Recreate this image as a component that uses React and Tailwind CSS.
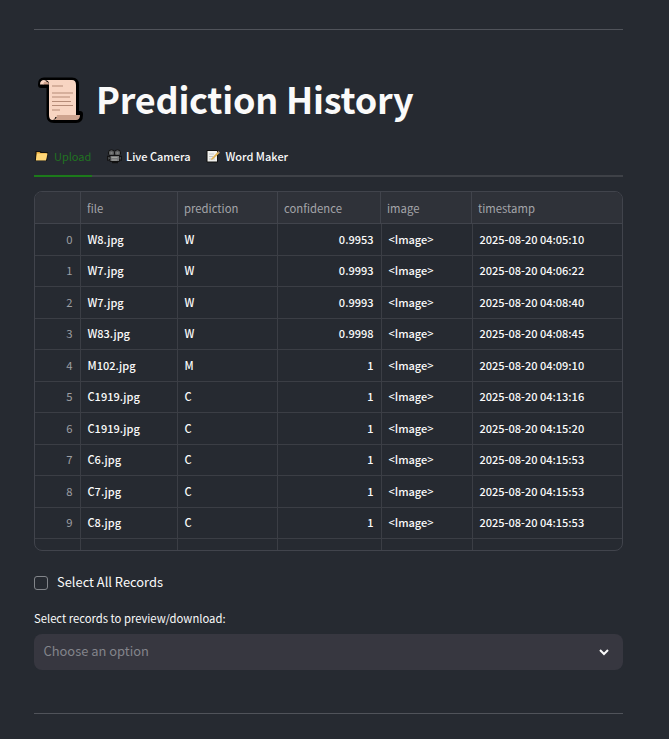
const rows = [
  ["W8.jpg", "W", "0.9953", "2025-08-20 04:05:10"],
  ["W7.jpg", "W", "0.9993", "2025-08-20 04:06:22"],
  ["W7.jpg", "W", "0.9993", "2025-08-20 04:08:40"],
  ["W83.jpg", "W", "0.9998", "2025-08-20 04:08:45"],
  ["M102.jpg", "M", "1", "2025-08-20 04:09:10"],
  ["C1919.jpg", "C", "1", "2025-08-20 04:13:16"],
  ["C1919.jpg", "C", "1", "2025-08-20 04:15:20"],
  ["C6.jpg", "C", "1", "2025-08-20 04:15:53"],
  ["C7.jpg", "C", "1", "2025-08-20 04:15:53"],
  ["C8.jpg", "C", "1", "2025-08-20 04:15:53"],
];

function Scroll() {
  return (
    <svg width="46" height="46" viewBox="0 0 46 46" className="shrink-0">
      <path
        d="M6 3.5H34Q38 3.5 38 8V37H42V38Q42 43 38 43H16Q11.5 43 11.5 38V8H3V7Q3 3.5 6 3.5Z"
        fill="#f3cfba"
        stroke="#000"
        strokeWidth="6"
        strokeLinejoin="round"
      />
      <path d="M6 3H34Q38 3 38 8V38H18Q17 43 14.5 43Q11 43 11 38V7Q11 3 6 3Z" fill="#f8d5c2" />
      <path d="M2 7.5Q2 3 6 3Q8 3 8.5 5Q6 5 5.5 7.5Z" fill="#f8d5c2" />
      <path d="M5 7.5Q6 4.5 8.5 4.5Q11 5 11 7.5Z" fill="#d1a48e" />
      <path d="M19 38H42Q42 43 38 43H15Q19 42 19 38Z" fill="#cfa48f" />
      <path d="M14 9H25M14 16H35M14 20H32M14 24.5H33M14 28.5H35M14 33H22" stroke="#b58b77" strokeWidth="1" />
    </svg>
  );
}

function Folder() {
  return (
    <svg width="15" height="14" viewBox="0 0 15 14" className="shrink-0">
      <path d="M2 2.5H6L7 3.5H13.5L12.5 11.5H1.5Z" fill="#e5a93c" stroke="#111" strokeWidth="1.2" strokeLinejoin="round" />
      <path d="M3 4.5H13.5L12 11.5H1.8Z" fill="#ffd778" />
    </svg>
  );
}

function MovieCamera() {
  return (
    <svg width="15" height="15" viewBox="0 0 15 15" className="shrink-0">
      <g stroke="#111" strokeWidth="1">
        <circle cx="4.5" cy="4" r="3.2" fill="#5d5f60" />
        <circle cx="10.5" cy="4" r="3.2" fill="#5d5f60" />
        <path d="M3 6.5H12.5V12.5H3Z" fill="#77797a" />
        <path d="M3 8L.6 7V11.5L3 10.5M12.5 8L14.4 7V11.5L12.5 10.5" fill="#4b4d4e" />
      </g>
      <path d="M3.5 4H5.5M9.5 4H11.5M4.5 8.5H10.5M5 11H10" stroke="#a0a19c" strokeWidth="1" />
      <path d="M5 13.5H11" stroke="#111" strokeWidth="1.5" />
    </svg>
  );
}

function Memo() {
  return (
    <svg width="15" height="15" viewBox="0 0 15 15" className="shrink-0">
      <path d="M1 1.5H11.5V13H1Z" fill="#f1f1ed" stroke="#111" strokeWidth="1" />
      <path d="M3 5H8M3 7.5H7M3 10H9" stroke="#b9bdbd" strokeWidth=".8" />
      <path d="M5.5 9.5L12 2.5L13.5 4L7 10.3L5 11Z" fill="#e2b457" />
      <path d="M11.4 3.2L12.4 2L14 3.5L13 4.5Z" fill="#a99078" />
    </svg>
  );
}

export default function App() {
  return (
    <main className="h-[739px] w-[669px] overflow-hidden whitespace-nowrap bg-[#262a31] pl-[34px] pr-[46px] pt-[29px] font-['Noto_Sans_CJK_SC','Noto_Sans',sans-serif] text-[#fafafa]">
      <hr className="border-t border-[#50535a]" />
      <h1 className="mt-[40px] flex h-[60px] items-center pl-[4px] text-[36px] font-bold leading-none tracking-[-0.25px]">
        <Scroll />
        <span className="-mt-[5px] ml-[12px]">Prediction History</span>
      </h1>
      <nav className="mt-[7px] flex h-[40px] border-b-2 border-[#3e4147] text-[11px] font-medium">
        <div className="-mb-0.5 mr-[15px] flex w-[58px] items-center gap-[5px] border-b-2 border-[#1c7a1a] font-normal text-[#217321]">
          <Folder />
          <span>Upload</span>
        </div>
        <div className="mr-4 flex items-center gap-1">
          <MovieCamera />
          <span>Live Camera</span>
        </div>
        <div className="flex items-center gap-1">
          <Memo />
          <span>Word Maker</span>
        </div>
      </nav>
      <section className="mt-[14px] h-[360px] w-[589px] overflow-hidden rounded-lg border border-[#41444c] text-[11px] leading-none">
        <div className="grid h-8 grid-cols-[46px_97px_100px_103px_91px_1fr] border-b border-[#41444c] bg-[#2f3239] text-[11.3px] text-[#a4a5a9] *:flex *:items-center *:border-r *:border-[#41444c] *:pl-1.5 *:pt-0.5 *:last:border-r-0">
          <div />
          <div>file</div>
          <div>prediction</div>
          <div>confidence</div>
          <div>image</div>
          <div>timestamp</div>
        </div>
        {rows.map(([file, letter, score, time], i) => (
          <div
            key={i}
            className="grid h-[31.5px] grid-cols-[46px_97px_100px_104px_91px_1fr] border-b border-[#3b3e45] font-medium *:flex *:items-center *:border-r *:border-[#3b3e45] *:pl-[6.5px] *:pr-[7.5px] *:last:border-r-0"
          >
            <div className="justify-end text-[11.3px] font-normal text-[#9d9fa3]">{i}</div>
            <div>{file}</div>
            <div>{letter}</div>
            <div className="justify-end">{score}</div>
            <div>&lt;Image&gt;</div>
            <div>{time}</div>
          </div>
        ))}
        <div className="grid h-4 grid-cols-[46px_97px_100px_104px_91px_1fr] *:border-r *:border-[#3b3e45] *:last:border-r-0">
          <div />
          <div />
          <div />
          <div />
          <div />
          <div />
        </div>
      </section>
      <label className="mt-[20px] flex h-6 items-center gap-[9px] text-[12.9px] leading-none">
        <span className="h-[14px] w-[14px] rounded-[3px] border border-[#82858a]" />
        <span className="-mt-px">Select All Records</span>
      </label>
      <p className="mt-[12px] h-[24px] text-[11.25px] leading-[22px]">Select records to preview/download:</p>
      <div className="mt-[3px] flex h-9 items-center justify-between rounded-lg bg-[#373740] pl-[9.5px] pr-[13px] text-[12.9px] leading-none text-[#83848b]">
        <span className="-mt-px">Choose an option</span>
        <svg width="12" height="12" viewBox="0 0 12 12" fill="none" stroke="#fafafa" strokeWidth="2">
          <path d="M2 4L6 8L10 4" />
        </svg>
      </div>
      <hr className="mt-[43px] border-t border-[#50535a]" />
    </main>
  );
}
